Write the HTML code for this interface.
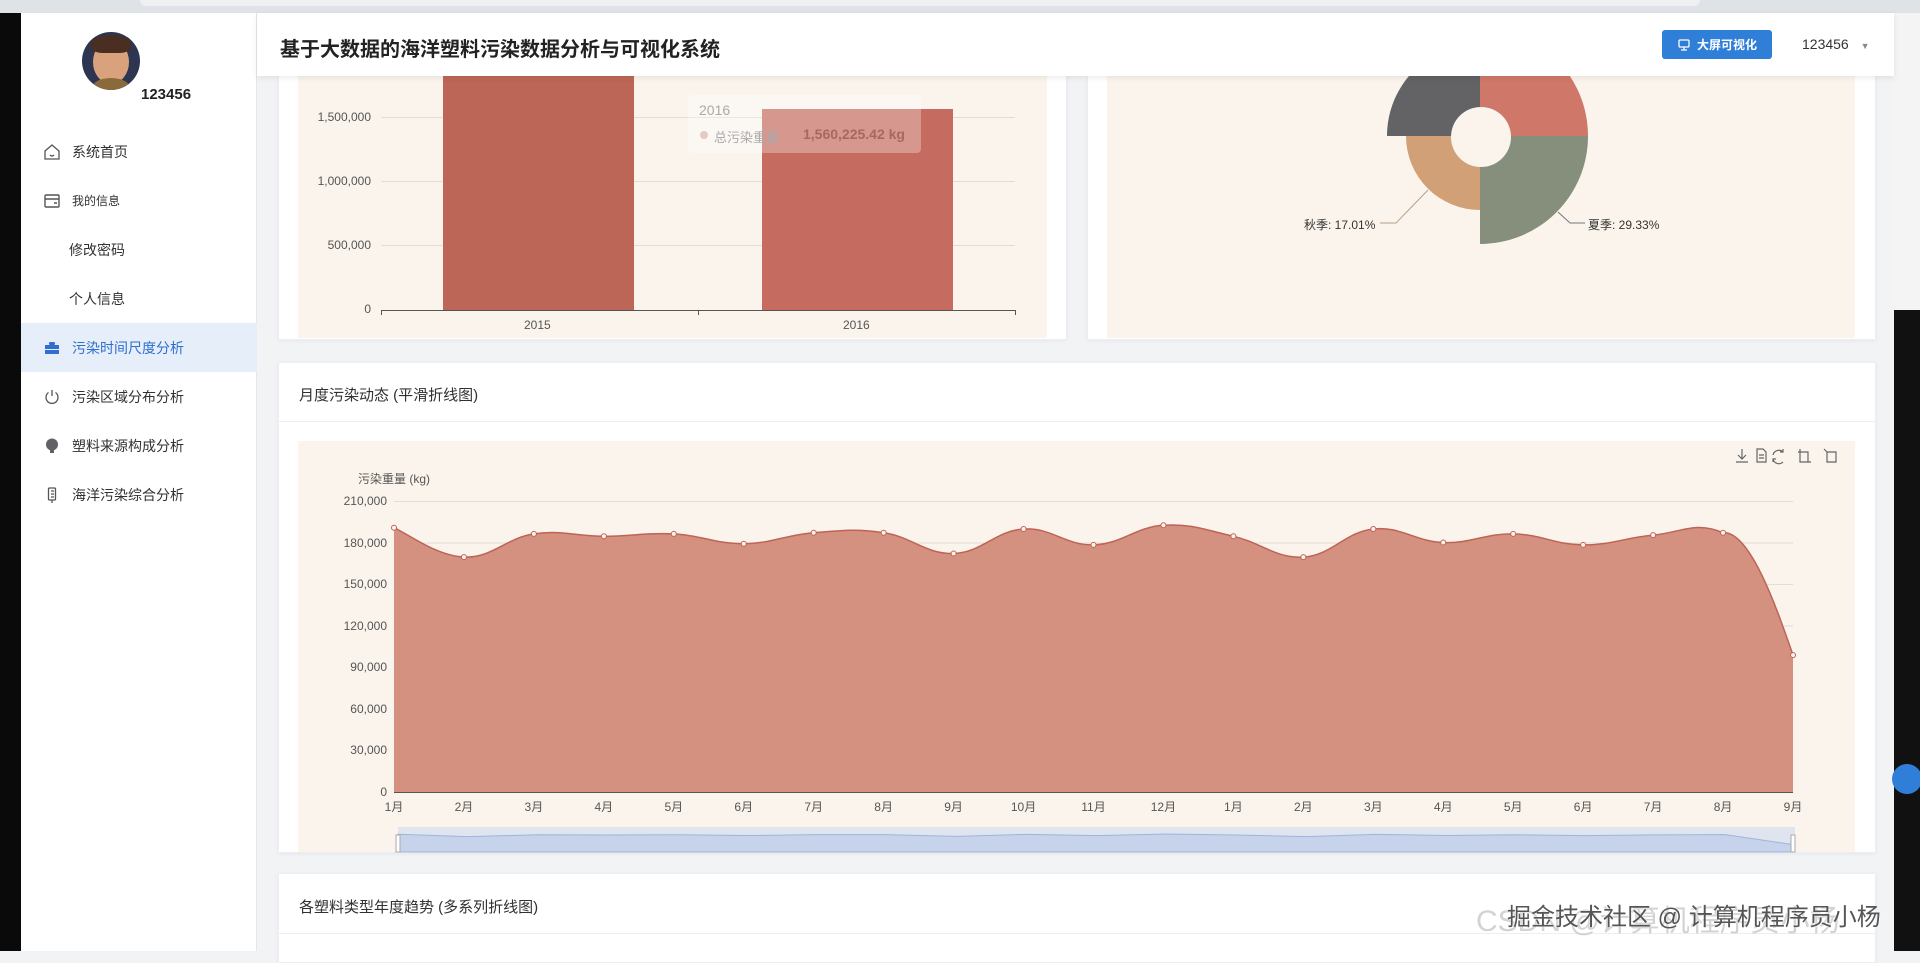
<!DOCTYPE html>
<html><head><meta charset="utf-8">
<style>
*{margin:0;padding:0;box-sizing:border-box}
body{width:1920px;height:951px;overflow:hidden;background:#f2f3f5;font-family:"Liberation Sans","Noto Sans CJK SC",sans-serif;position:relative;color:#303133}
.abs{position:absolute}
.topbar{left:0;top:0;width:1920px;height:13px;background:#dfe2e6}
.topbar div{position:absolute;left:140px;top:0;width:1560px;height:6px;background:#eef0f3;border-radius:0 0 8px 8px}
.blk{left:0;top:13px;width:21px;height:938px;background:#0a0a0a}
.side{left:21px;top:13px;width:236px;height:938px;background:#fff;border-right:1px solid #e6e6e6}
.item{position:absolute;left:0;width:236px;height:49px;font-size:14px;color:#303133;display:flex;align-items:center}
.item .ic{position:absolute;left:22px;top:16px;width:18px;height:18px}
.item span{position:absolute;left:51px}
.item.sub span{left:48px}
.item.act{background:#e5eef9;color:#2f6fcf}
.header{left:257px;top:13px;width:1637px;height:63px;background:#fff;box-shadow:0 2px 6px rgba(0,0,0,.08);z-index:5}
.card{position:absolute;background:#fff;border:1px solid #ebeef5;box-shadow:0 1px 4px rgba(0,0,0,.05)}
.cream{position:absolute;background:#faf4ec}
.t{position:absolute;font-size:12px;color:#555;white-space:nowrap}
.r{text-align:right;width:80px}
</style></head><body>
<div class="abs topbar"><div></div></div>
<div class="abs blk"></div>
<div class="abs" style="left:1894px;top:310px;width:26px;height:641px;background:#111"></div>
<div class="abs" style="left:1894px;top:13px;width:26px;height:297px;background:#f4f4f4"></div>

<div class="abs side">
  <div class="abs" style="left:61px;top:19px;width:58px;height:58px;border-radius:50%;background:#2d3550;overflow:hidden">
    <div class="abs" style="left:11px;top:8px;width:36px;height:44px;border-radius:50%;background:#d9a27c"></div>
    <div class="abs" style="left:9px;top:3px;width:40px;height:18px;border-radius:50% 50% 30% 30%;background:#4a2e22"></div>
    <div class="abs" style="left:10px;top:46px;width:38px;height:20px;border-radius:50%;background:#8a6a3a"></div>
  </div>
  <div class="abs" style="left:120px;top:73px;font-size:15px;font-weight:bold;color:#222">123456</div>

  <div class="item" style="top:114px"><svg class="ic" viewBox="0 0 18 18" fill="none" stroke="#555" stroke-width="1.3"><path d="M2 8L9 2l7 6v8H2z"/><path d="M7 12q2 2 4 0"/></svg><span>系统首页</span></div>
  <div class="item" style="top:163px;font-size:12px"><svg class="ic" viewBox="0 0 18 18" fill="none" stroke="#555" stroke-width="1.4"><rect x="2" y="3" width="14" height="12" rx="1"/><path d="M2 7h14M11 11h3"/></svg><span>我的信息</span></div>
  <div class="item sub" style="top:212px"><span>修改密码</span></div>
  <div class="item sub" style="top:261px"><span>个人信息</span></div>
  <div class="item act" style="top:310px"><svg class="ic" viewBox="0 0 18 18" fill="#2f6fcf"><rect x="6" y="3" width="6" height="3" rx="1"/><rect x="2" y="6" width="14" height="4"/><rect x="2" y="11" width="14" height="4"/></svg><span>污染时间尺度分析</span></div>
  <div class="item" style="top:359px"><svg class="ic" viewBox="0 0 18 18" fill="none" stroke="#555" stroke-width="1.3"><path d="M5.5 4.5a6 6 0 1 0 7 0"/><path d="M9 2v6"/></svg><span>污染区域分布分析</span></div>
  <div class="item" style="top:408px"><svg class="ic" viewBox="0 0 18 18" fill="#606266"><circle cx="9" cy="7.5" r="6"/><rect x="7" y="13" width="4" height="3"/></svg><span>塑料来源构成分析</span></div>
  <div class="item" style="top:457px"><svg class="ic" viewBox="0 0 18 18" fill="none" stroke="#555" stroke-width="1.3"><rect x="5.5" y="2" width="7" height="12" rx="1"/><path d="M8 5h3M8 8h3M8 11h3M9 14v3"/></svg><span>海洋污染综合分析</span></div>
</div>

<div class="abs header">
  <div class="abs" style="left:23px;top:20px;font-size:20px;font-weight:bold;color:#222">基于大数据的海洋塑料污染数据分析与可视化系统</div>
  <div class="abs" style="left:1405px;top:17px;width:110px;height:29px;background:#2f7fd8;border-radius:3px;color:#fff;font-size:12px;font-weight:bold;display:flex;align-items:center;justify-content:center">
    <svg width="14" height="14" viewBox="0 0 14 14" fill="none" stroke="#fff" stroke-width="1.3" style="margin-right:6px"><rect x="2" y="2" width="10" height="7" rx="1"/><path d="M7 9v3M4 12h6"/></svg>大屏可视化</div>
  <div class="abs" style="left:1545px;top:23px;font-size:14px;color:#333">123456 <span style="font-size:9px;color:#888;margin-left:8px">▼</span></div>
</div>

<!-- card1 -->
<div class="card" style="left:278px;top:40px;width:789px;height:300px"></div>
<div class="cream" style="left:298px;top:76px;width:749px;height:262px"></div>
<svg class="abs" style="left:0;top:0" width="1920" height="951">
  <g stroke="#e3ddd3" stroke-width="1"><line x1="381" y1="117.5" x2="1015" y2="117.5"/><line x1="381" y1="181.5" x2="1015" y2="181.5"/><line x1="381" y1="245.5" x2="1015" y2="245.5"/></g>
  <rect x="443" y="76" width="191" height="234" fill="#bc6658"/>
  <rect x="762" y="109" width="191" height="201" fill="#c56b5f"/>
  <line x1="381" y1="310.5" x2="1015" y2="310.5" stroke="#555"/>
  <g stroke="#555"><line x1="381.5" y1="310" x2="381.5" y2="315"/><line x1="698.5" y1="310" x2="698.5" y2="315"/><line x1="1015.5" y1="310" x2="1015.5" y2="315"/></g>
  <rect x="688" y="95" width="233" height="58" rx="4" fill="rgba(255,255,255,0.3)"/>
  <circle cx="704" cy="135" r="4" fill="#e8c8c0"/>
  <path d="M1480 136 L1480 28 A108 108 0 0 1 1588 136Z" fill="#cf786a"/>
  <path d="M1480 136 L1588 136 A108 108 0 0 1 1480 244Z" fill="#858f7b"/>
  <path d="M1480 136 L1480 210 A74 74 0 0 1 1406 136Z" fill="#d1a077"/>
  <path d="M1480 136 L1387 136 A93 93 0 0 1 1480 43Z" fill="#636366"/>
  <circle cx="1481" cy="137" r="30" fill="#faf4ec"/>
  <path d="M1428 190 L1396 223 L1380 223" fill="none" stroke="#b5a08a"/>
  <path d="M1558 212 L1570 223 L1585 223" fill="none" stroke="#777"/>
</svg>
<div class="t r" style="left:291px;top:110px">1,500,000</div>
<div class="t r" style="left:291px;top:174px">1,000,000</div>
<div class="t r" style="left:291px;top:238px">500,000</div>
<div class="t r" style="left:291px;top:302px">0</div>
<div class="t" style="left:524px;top:318px">2015</div>
<div class="t" style="left:843px;top:318px">2016</div>
<div class="t" style="left:699px;top:102px;font-size:14px;color:#aaa">2016</div>
<div class="t" style="left:714px;top:127px;font-size:13px;color:#aaa">总污染重量</div>
<div class="t" style="left:803px;top:126px;font-size:14px;color:#a86860;font-weight:bold">1,560,225.42 kg</div>

<!-- card2 -->
<div class="card" style="left:1087px;top:40px;width:789px;height:300px;z-index:-1"></div>
<div class="cream" style="left:1107px;top:76px;width:748px;height:262px;z-index:-1"></div>
<div class="t" style="left:1304px;top:216px;color:#333">秋季: 17.01%</div>
<div class="t" style="left:1588px;top:216px;color:#333">夏季: 29.33%</div>

<!-- card3 -->
<div class="card" style="left:278px;top:362px;width:1598px;height:491px">
  <div class="abs" style="left:20px;top:21px;font-size:15px;color:#303133">月度污染动态 (平滑折线图)</div>
  <div class="abs" style="left:0;top:58px;width:1596px;height:1px;background:#ebeef5"></div>
</div>
<div class="cream" style="left:298px;top:441px;width:1557px;height:411px"></div>
<svg class="abs" style="left:0;top:0" width="1920" height="951" id="lc">
  <g stroke="#e3ddd3"><line x1="394" y1="501.5" x2="1793" y2="501.5"/><line x1="394" y1="543" x2="1793" y2="543"/><line x1="394" y1="584.5" x2="1793" y2="584.5"/><line x1="394" y1="626" x2="1793" y2="626"/><line x1="394" y1="667.5" x2="1793" y2="667.5"/><line x1="394" y1="709" x2="1793" y2="709"/><line x1="394" y1="750.5" x2="1793" y2="750.5"/></g>
  <path id="area" fill="#d4917f"/>
  <path id="ln" fill="none" stroke="#bf6357" stroke-width="1.5"/>
  <g id="dots"></g>
  <line x1="394" y1="792.5" x2="1793" y2="792.5" stroke="#555"/>
  <rect x="398" y="827" width="1397" height="25" fill="#dfe5ef"/>
  <path id="dz" fill="#c6d3ea" stroke="#9fb4dc"/>
  <rect x="396" y="835" width="4" height="17" fill="#fff" stroke="#aaa"/>
  <rect x="1791" y="835" width="4" height="17" fill="#fff" stroke="#aaa"/>
  <g fill="none" stroke="#666" stroke-width="1.2">
    <path d="M1742 449v10M1738 455l4 4 4-4M1736 462h12"/>
    <path d="M1757 449h6l3 3v10h-9zM1759 455h5M1759 458h5"/>
    <path d="M1783 452a6 6 0 0 0-10 3M1773 459a6 6 0 0 0 10 3M1783 449v3h-3M1773 462v-3h3"/>
    <path d="M1800 449v13h11M1798 452h10v10"/>
    <path d="M1827 452h9v10h-9v-10M1827 452l-3-3"/>
  </g>
</svg>
<div class="t" style="left:358px;top:470px;font-size:12px">污染重量 (kg)</div>
<div id="yl"></div><div id="xl"></div>

<!-- card4 -->
<div class="card" style="left:278px;top:873px;width:1598px;height:90px">
  <div class="abs" style="left:20px;top:22px;font-size:15px;color:#303133">各塑料类型年度趋势 (多系列折线图)</div>
  <div class="abs" style="left:0;top:59px;width:1596px;height:1px;background:#ebeef5"></div>
</div>
<div class="abs" style="left:1892px;top:764px;width:30px;height:30px;border-radius:50%;background:#2f7fd8"></div>
<div class="abs" style="left:1476px;top:896px;font-size:30px;color:rgba(200,200,200,0.8);white-space:nowrap">CSDN @计算机程序员小杨</div>
<div class="abs" style="left:1507px;top:897px;font-size:24px;color:#555;white-space:nowrap;text-shadow:0 0 2px #fff">掘金技术社区 @ 计算机程序员小杨</div>

<script>
var ys=[527.8,557.1,533.9,536.3,533.9,543.7,532.7,532.7,553.5,529,544.9,525.3,536.3,557.1,529,542.5,533.9,544.9,535.1,532.7,655.1];
var labs=["1月","2月","3月","4月","5月","6月","7月","8月","9月","10月","11月","12月","1月","2月","3月","4月","5月","6月","7月","8月","9月"];
var x0=394,dx=(1793-394)/20,pts=ys.map(function(y,i){return [x0+i*dx,y]});
function cl(v,a,b){var lo=Math.min(a,b),hi=Math.max(a,b);return Math.max(lo,Math.min(hi,v));}
function smooth(p){var d="M"+p[0][0]+" "+p[0][1];for(var i=0;i<p.length-1;i++){var a=p[i-1]||p[i],b=p[i],c=p[i+1],e=p[i+2]||c;var t=0.2;
var y1=b[1]+(c[1]-a[1])*t,y2=c[1]-(e[1]-b[1])*t;
if(i>0){var lo=Math.min(a[1],b[1],c[1]);}
y1=cl(y1,Math.min(b[1],c[1])-12,Math.max(b[1],c[1])+12);y2=cl(y2,Math.min(b[1],c[1])-12,Math.max(b[1],c[1])+12);
if(i==19){y1=b[1]-2;y2=c[1]-40;}
d+=" C"+(b[0]+(c[0]-a[0])*t)+" "+y1+" "+(c[0]-(e[0]-b[0])*t)+" "+y2+" "+c[0]+" "+c[1];}return d;}
var s=smooth(pts);
document.getElementById("ln").setAttribute("d",s);
document.getElementById("area").setAttribute("d",s+" L1793 792 L394 792Z");
var g="";pts.forEach(function(p){g+='<circle cx="'+p[0]+'" cy="'+p[1]+'" r="2.5" fill="#faf4ec" stroke="#bf6357"/>'});
document.getElementById("dots").innerHTML=g;
var dz=pts.map(function(p,i){return [398+i*(1397/20),834+(p[1]-525)/12]});
var dd="M398 852 L"+dz.map(function(p){return p[0]+" "+p[1]}).join(" L")+" L1795 852Z";
document.getElementById("dz").setAttribute("d",dd);
var yh="";var vals=["210,000","180,000","150,000","120,000","90,000","60,000","30,000","0"];
vals.forEach(function(v,i){yh+='<div class="t r" style="left:307px;top:'+(494+i*41.5)+'px">'+v+'</div>'});
document.getElementById("yl").innerHTML=yh;
var xh="";labs.forEach(function(l,i){xh+='<div class="t" style="left:'+(x0+i*dx-20)+'px;top:798px;width:40px;text-align:center">'+l+'</div>'});
document.getElementById("xl").innerHTML=xh;
</script>
</body></html>
